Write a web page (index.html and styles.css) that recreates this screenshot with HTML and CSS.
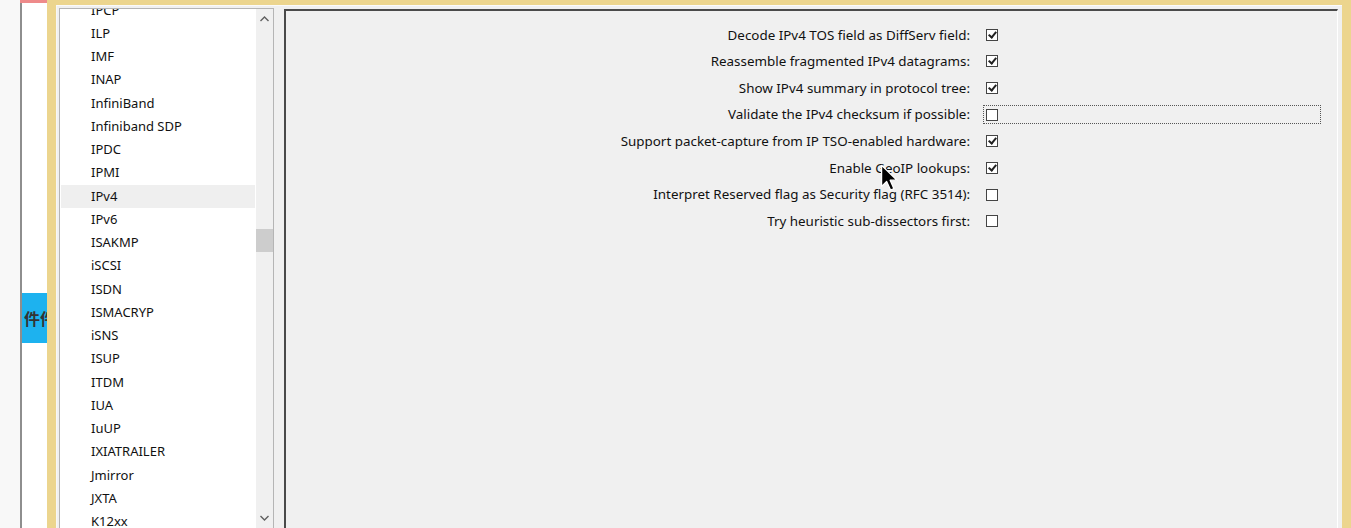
FILE: index.html
```html
<!DOCTYPE html>
<html>
<head>
<meta charset="utf-8">
<link rel="stylesheet" href="styles.css">
</head>
<body>
<div class="screen">
  <div class="desk"></div>
  <div class="bgwin">
    <div class="bgwin-top"></div>
    <div class="bgwin-body">
      <div class="bgwin-btn">件件</div>
    </div>
  </div>
  <div class="dialog">
    <div class="client">
      <div class="listbox">
        <div class="list-inner">
          <ul class="items">
            <li>IPCP</li>
            <li>ILP</li>
            <li>IMF</li>
            <li>INAP</li>
            <li>InfiniBand</li>
            <li>Infiniband SDP</li>
            <li>IPDC</li>
            <li>IPMI</li>
            <li class="sel">IPv4</li>
            <li>IPv6</li>
            <li>ISAKMP</li>
            <li>iSCSI</li>
            <li>ISDN</li>
            <li>ISMACRYP</li>
            <li>iSNS</li>
            <li>ISUP</li>
            <li>ITDM</li>
            <li>IUA</li>
            <li>IuUP</li>
            <li>IXIATRAILER</li>
            <li>Jmirror</li>
            <li>JXTA</li>
            <li>K12xx</li>
            <li>KDP</li>
          </ul>
        </div>
        <div class="vscroll">
          <div class="arrow up"><svg width="9" height="6" viewBox="0 0 9 6"><path d="M0.5 5 L4.5 1 L8.5 5" fill="none" stroke="#606060" stroke-width="1.4"/></svg></div>
          <div class="track"><div class="thumb"></div></div>
          <div class="arrow down"><svg width="9" height="6" viewBox="0 0 9 6"><path d="M0.5 1 L4.5 5 L8.5 1" fill="none" stroke="#606060" stroke-width="1.4"/></svg></div>
        </div>
      </div>
      <div class="panel">
        <div class="prefs">
          <div class="lbl">Decode IPv4 TOS field as DiffServ field:</div>
          <div class="ctl"><span class="cb on"></span></div>
          <div class="lbl">Reassemble fragmented IPv4 datagrams:</div>
          <div class="ctl"><span class="cb on"></span></div>
          <div class="lbl">Show IPv4 summary in protocol tree:</div>
          <div class="ctl"><span class="cb on"></span></div>
          <div class="lbl">Validate the IPv4 checksum if possible:</div>
          <div class="ctl focus"><span class="cb"></span></div>
          <div class="lbl">Support packet-capture from IP TSO-enabled hardware:</div>
          <div class="ctl"><span class="cb on"></span></div>
          <div class="lbl">Enable GeoIP lookups:</div>
          <div class="ctl"><span class="cb on"></span></div>
          <div class="lbl">Interpret Reserved flag as Security flag (RFC 3514):</div>
          <div class="ctl"><span class="cb"></span></div>
          <div class="lbl">Try heuristic sub-dissectors first:</div>
          <div class="ctl"><span class="cb"></span></div>
        </div>
      </div>
    </div>
  </div>
  <svg class="cursor" width="20" height="28" viewBox="0 0 14 20"><path d="M1 1 L1 16 L4.6 12.5 L7.4 18.6 L9.8 17.6 L7.1 11.6 L12 11.6 Z" fill="#000" stroke="#fff" stroke-width="0.9" stroke-linejoin="round"/></svg>
</div>
</body>
</html>
```
FILE: styles.css
```css
* { box-sizing: border-box; }
html, body { margin: 0; padding: 0; }
body {
  width: 1351px;
  height: 528px;
  overflow: hidden;
  background: #f8f8f8;
  font-family: "Noto Sans", "Liberation Sans", sans-serif;
  font-size: 13px;
  color: #000;
}
.screen {
  position: relative;
  display: flex;
  width: 1351px;
  height: 528px;
}
.desk { width: 20px; background: #f8f8f8; }
.bgwin {
  width: 27px;
  display: flex;
  flex-direction: column;
  background: #fff;
}
.bgwin-top { height: 3px; background: #ee8a8a; }
.bgwin-body {
  flex: 1;
  border-left: 2px solid #8e8e8e;
  padding-top: 290px;
  overflow: hidden;
}
.bgwin-btn {
  height: 50px;
  background: #1db2ef;
  color: #333;
  font-family: "Noto Sans CJK SC", sans-serif;
  font-weight: bold;
  font-size: 16px;
  line-height: 50px;
  padding-left: 2px;
  white-space: nowrap;
  overflow: hidden;
}
.dialog {
  flex: 1;
  background: #ecd58e;
  padding: 5px 9px 0 9px;
  display: flex;
}
.client {
  flex: 1;
  background: #f0f0f0;
  border-top: 1px solid #fafafa;
  border-left: 1px solid #f7f7f7;
  display: flex;
  padding: 2px 4px 0 2px;
  gap: 10px;
}
.listbox {
  width: 215px;
  border: 1px solid #b5b5b5;
  border-bottom: none;
  display: flex;
  background: #fff;
  overflow: hidden;
}
.list-inner {
  flex: 1;
  overflow: hidden;
}
.items {
  list-style: none;
  margin: -10.5px 0 0 0;
  padding: 0;
}
.items li {
  height: 23.25px;
  line-height: 23.25px;
  padding-left: 30px;
  margin: 0 1px;
  white-space: nowrap;
  color: #111;
}
.items li.sel { background: #efefef; }
.vscroll {
  width: 17px;
  background: #f0f0f0;
  display: flex;
  flex-direction: column;
}
.arrow {
  height: 17px;
  display: flex;
  align-items: center;
  justify-content: center;
}
.arrow.up { margin-top: 1px; }
.track { flex: 1; position: relative; }
.thumb {
  margin-top: 202px;
  height: 23px;
  background: #cdcdcd;
}
.arrow.down { margin-bottom: 2px; }
.panel {
  flex: 1;
  margin-top: 1px;
  border-top: 2px solid #4a4a4a;
  border-left: 2px solid #4a4a4a;
  border-right: 1px solid #ffffff;
  background: #f0f0f0;
}
.prefs {
  display: grid;
  grid-template-columns: 684px 338px;
  column-gap: 13px;
  grid-auto-rows: 26.67px;
  padding-top: 10.5px;
}
.lbl {
  text-align: right;
  line-height: 26.67px;
  white-space: nowrap;
  font-size: 13.4px;
  color: #111;
}
.ctl {
  display: flex;
  align-items: center;
  padding-left: 2px;
  border: 1px solid transparent;
  margin: 4px 0;
}
.ctl.focus { border: 1px dotted #555; }
.cb {
  width: 12px;
  height: 12px;
  border: 1px solid #444;
  background: #fff;
  position: relative;
}
.cb.on::after {
  content: "";
  position: absolute;
  left: 3px;
  top: 0px;
  width: 3px;
  height: 6px;
  border-right: 2px solid #222;
  border-bottom: 2px solid #222;
  transform: rotate(40deg);
}
.cursor {
  position: absolute;
  left: 880px;
  top: 164px;
}
```
